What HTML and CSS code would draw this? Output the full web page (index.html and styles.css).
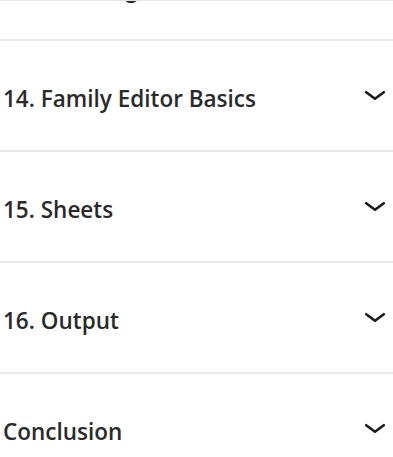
FILE: index.html
```html
<!DOCTYPE html>
<html>
<head>
<meta charset="utf-8">
<title>Course outline</title>
<link rel="stylesheet" href="styles.css">
</head>
<body>
<div class="outline">
  <ul class="sections">
    <li class="section">
      <span class="section-title">13. Detailing</span>
      <svg class="chevron" viewBox="0 0 20 10"><path d="M2 2 L10 8 L18 2"/></svg>
    </li>
    <li class="section">
      <span class="section-title">14. Family Editor Basics</span>
      <svg class="chevron" viewBox="0 0 20 10"><path d="M2 2 L10 8 L18 2"/></svg>
    </li>
    <li class="section">
      <span class="section-title">15. Sheets</span>
      <svg class="chevron" viewBox="0 0 20 10"><path d="M2 2 L10 8 L18 2"/></svg>
    </li>
    <li class="section">
      <span class="section-title">16. Output</span>
      <svg class="chevron" viewBox="0 0 20 10"><path d="M2 2 L10 8 L18 2"/></svg>
    </li>
    <li class="section">
      <span class="section-title">Conclusion</span>
      <svg class="chevron" viewBox="0 0 20 10"><path d="M2 2 L10 8 L18 2"/></svg>
    </li>
  </ul>
</div>
</body>
</html>
```
FILE: styles.css
```css
body {
  margin: 0;
  background: #fff;
  font-family: "Open Sans", "Noto Sans", sans-serif;
  color: #2a2a2a;
}

.outline {
  height: 457px;
  overflow: hidden;
  border-top: 1px solid #e6e6e6;
  box-sizing: border-box;
}

.sections {
  list-style: none;
  margin: -71px 0 0 0;
  padding: 0;
}

.section {
  display: flex;
  align-items: center;
  justify-content: space-between;
  height: 109px;
  padding: 0 7px 0 3px;
  border-bottom: 2px solid #e8e8e8;
}

.section-title {
  font-size: 22.5px;
  font-weight: 600;
  padding-top: 6px;
}

.section:first-child .section-title {
  padding-top: 8px;
}

.chevron {
  width: 22px;
  height: 11px;
  fill: none;
  stroke: #1a1a1a;
  stroke-width: 2.4;
  stroke-linecap: round;
  stroke-linejoin: round;
}
```
